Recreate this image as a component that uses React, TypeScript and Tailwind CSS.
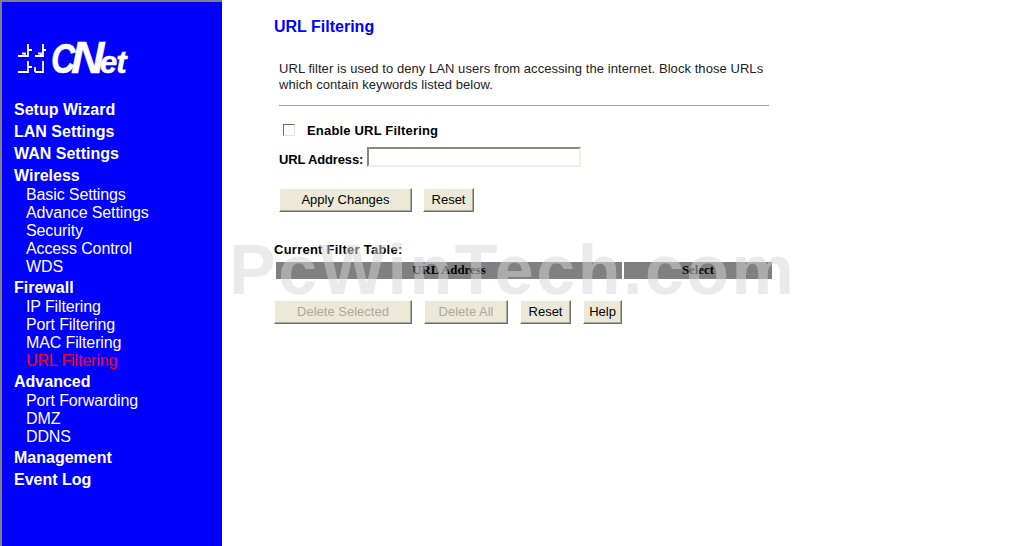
const font = "font-['Liberation_Sans',Arial,sans-serif]";

function Logo() {
  const family = "'Liberation Sans',Arial,sans-serif";
  return (
    <svg width="116" height="36" viewBox="0 0 116 36" className="block overflow-visible">
      <g fill="none" stroke="#fff" strokeWidth="1.8">
        <path d="M4 16h10V4M8 13.5h3v3M14 10h4" />
        <path d="M21 16h8V4M24 13.5h3v3M29 10h3" />
        <path d="M4 32h10V21M14 27h4" />
        <path d="M21 32h8V21M21 32v-5" />
      </g>
      <g fill="#fff" stroke="#fff" strokeWidth=".5" fontWeight="700" fontStyle="italic" fontFamily={family}>
        <text transform="translate(37 33) scale(.78 1)" fontSize="43">C</text>
        <text transform="translate(57 33) scale(1.05 1)" fontSize="44">N</text>
        <text x="86" y="33" fontSize="31" letterSpacing="-1">et</text>
      </g>
    </svg>
  );
}

function Top({ children }: { children: string }) {
  return <div className="h-[22px] pt-px leading-[22px] text-[16px] font-bold text-white pl-[12px]">{children}</div>;
}

function Sub({ children, active }: { children: string; active?: boolean }) {
  return <div className={`h-[18px] leading-[18px] text-[16px] tracking-[-0.12px] pl-[24px] ${active ? "text-[#ff0000]" : "text-white"}`}>{children}</div>;
}

function Btn({ children, w, disabled }: { children: string; w: string; disabled?: boolean }) {
  return (
    <button className={`${w} h-[24px] pb-[2px] bg-[#ece9d8] border border-t-white border-l-white border-r-[#716f64] border-b-[#716f64] shadow-[inset_-1px_-1px_0_#aca899] text-[13px] leading-none ${disabled ? "text-[#aca899]" : "text-black"}`}>
      {children}
    </button>
  );
}

export default function App() {
  return (
    <div className={`${font} relative h-[546px] w-[1022px] overflow-hidden bg-white flex`}>
      <aside className="w-[222px] h-full bg-[#0000ff] border-l-2 border-t-2 border-[#808080] shrink-0">
        <div className="pl-[12px] pt-[38px] h-[96px]"><Logo /></div>
        <nav>
          <Top>Setup Wizard</Top>
          <Top>LAN Settings</Top>
          <Top>WAN Settings</Top>
          <Top>Wireless</Top>
          <Sub>Basic Settings</Sub>
          <Sub>Advance Settings</Sub>
          <Sub>Security</Sub>
          <Sub>Access Control</Sub>
          <Sub>WDS</Sub>
          <Top>Firewall</Top>
          <Sub>IP Filtering</Sub>
          <Sub>Port Filtering</Sub>
          <Sub>MAC Filtering</Sub>
          <Sub active>URL Filtering</Sub>
          <Top>Advanced</Top>
          <Sub>Port Forwarding</Sub>
          <Sub>DMZ</Sub>
          <Sub>DDNS</Sub>
          <Top>Management</Top>
          <Top>Event Log</Top>
        </nav>
      </aside>

      <main className="flex-1 pl-[52px] pt-[17px] text-black">
        <h1 className="text-[16px] leading-[20px] font-bold text-[#0000ff]">URL Filtering</h1>
        <p className="mt-[24px] ml-[5px] w-[490px] text-[13px] tracking-[0.06px] leading-[16px] text-[#222]">
          URL filter is used to deny LAN users from accessing the internet. Block those URLs which contain keywords listed below.
        </p>
        <hr className="mt-[12px] ml-[5px] w-[490px] border-t border-[#a0a0a0]" />

        <div className="mt-[16px] ml-[9px] flex items-center h-[16px]">
          <span className="w-[12px] h-[12px] border border-t-[#716f64] border-l-[#716f64] border-r-[#e5e3d6] border-b-[#e5e3d6] bg-white" />
          <span className="ml-[12px] pt-px text-[13px] tracking-[0.18px] font-bold">Enable URL Filtering</span>
        </div>
        <div className="mt-[9px] ml-[5px] flex items-center h-[20px]">
          <span className="w-[84px] pt-[6px] text-[13px] tracking-[-0.15px] font-bold whitespace-nowrap">URL Address:</span>
          <span className="ml-[4px] w-[214px] h-[20px] border-2 border-t-[#8b8979] border-l-[#8b8979] border-r-[#f1efe2] border-b-[#f1efe2] bg-white" />
        </div>
        <div className="mt-[21px] ml-[5px] flex gap-[11px]">
          <Btn w="w-[133px]">Apply Changes</Btn>
          <Btn w="w-[51px]">Reset</Btn>
        </div>

        <div className="mt-[30px] text-[13px] tracking-[0.25px] leading-[16px] font-bold">Current Filter Table:</div>
        <div className="mt-[4px] ml-[2px] flex gap-[2px] h-[17px] font-['Liberation_Serif',serif] text-[12.8px] font-bold leading-[17px] text-center">
          <div className="w-[346px] bg-[#808080]">URL Address</div>
          <div className="w-[148px] bg-[#808080]">Select</div>
        </div>
        <div className="mt-[21px] flex gap-[12px]">
          <Btn w="w-[138px]" disabled>Delete Selected</Btn>
          <Btn w="w-[84px]" disabled>Delete All</Btn>
          <Btn w="w-[51px]">Reset</Btn>
          <Btn w="w-[39px]">Help</Btn>
        </div>
      </main>

      <div className="absolute left-[229px] top-[232px] text-[70px] tracking-[2.5px] leading-[76px] font-bold text-[rgba(213,213,213,0.5)] whitespace-nowrap pointer-events-none">
        PcWinTech.com
      </div>
    </div>
  );
}
